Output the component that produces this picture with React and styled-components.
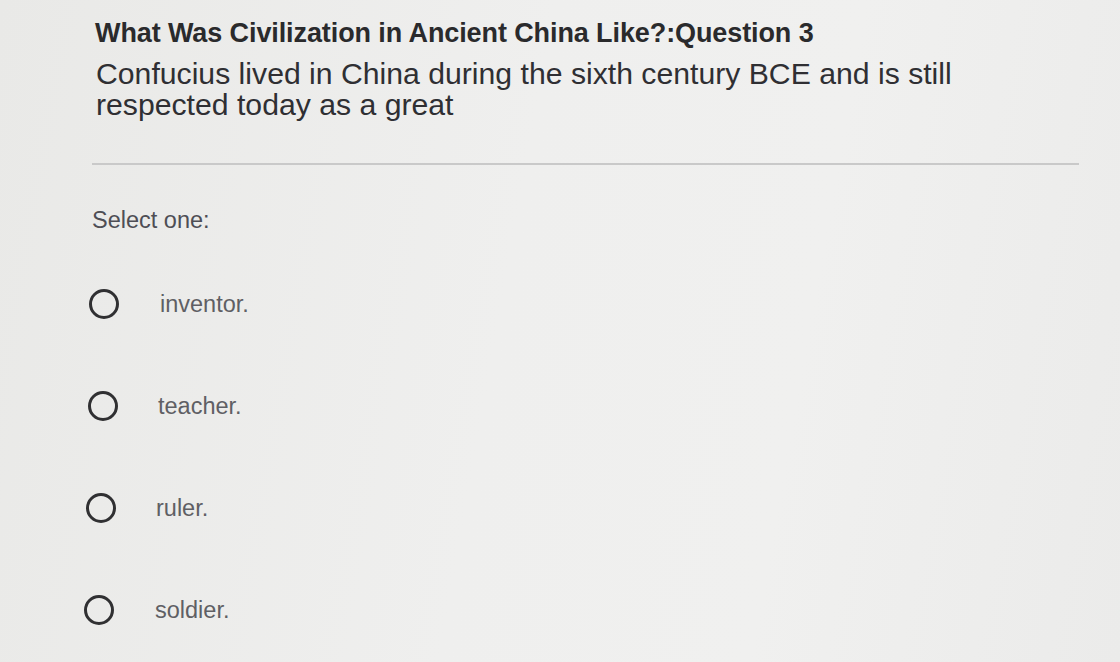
import React from "react";
import styled, { createGlobalStyle } from "styled-components";

const Global = createGlobalStyle`
  html, body { margin: 0; padding: 0; }
  body {
    width: 1120px;
    height: 662px;
    overflow: hidden;
    font-family: "Liberation Sans", Arial, sans-serif;
    background: #ebebe9;
  }
`;

const Page = styled.div`
  width: 1120px;
  height: 662px;
  box-sizing: border-box;
  padding: 15px 41px 0 92px;
  background: linear-gradient(100deg, #e9e9e7 0%, #efefee 45%, #f0f0ef 70%, #ebebea 100%);
`;

const Title = styled.h1`
  margin: 0 0 0 3px;
  font-size: 27px;
  line-height: 36px;
  font-weight: 700;
  color: #2a2a2c;
  letter-spacing: -0.1px;
`;

const Prompt = styled.p`
  margin: 7px 0 0 4px;
  font-size: 30.2px;
  line-height: 31px;
  font-weight: 400;
  color: #2f2f33;
  width: 960px;
`;

const Divider = styled.hr`
  margin: 43px 0 0 0;
  border: none;
  height: 2px;
  background: #c9c9c9;
`;

const Instruction = styled.div`
  margin-top: 40px;
  font-size: 23.5px;
  line-height: 30px;
  color: #4e4e55;
`;

const Options = styled.div`
  margin-top: 54px;
  display: flex;
  flex-direction: column;
  gap: 72px;
`;

const Option = styled.label`
  display: flex;
  align-items: center;
  height: 30px;
  margin-left: ${(p) => p.$shift}px;
  cursor: pointer;
`;

const Radio = styled.span`
  width: 24px;
  height: 24px;
  border: 3px solid #303032;
  border-radius: 50%;
  flex: none;
`;

const OptionText = styled.span`
  margin-left: ${(p) => p.$gap}px;
  font-size: 23.5px;
  line-height: 30px;
  color: #5f5f64;
`;

const options = [
  { text: "inventor.", shift: -3, gap: 41 },
  { text: "teacher.", shift: -4, gap: 40 },
  { text: "ruler.", shift: -6, gap: 40 },
  { text: "soldier.", shift: -8, gap: 41 },
];

export default function App() {
  return (
    <>
      <Global />
      <Page>
        <Title>What Was Civilization in Ancient China Like?:Question 3</Title>
        <Prompt>
          Confucius lived in China during the sixth century BCE and is still
          respected today as a great
        </Prompt>
        <Divider />
        <Instruction>Select one:</Instruction>
        <Options>
          {options.map((o) => (
            <Option key={o.text} $shift={o.shift}>
              <Radio />
              <OptionText $gap={o.gap}>{o.text}</OptionText>
            </Option>
          ))}
        </Options>
      </Page>
    </>
  );
}
